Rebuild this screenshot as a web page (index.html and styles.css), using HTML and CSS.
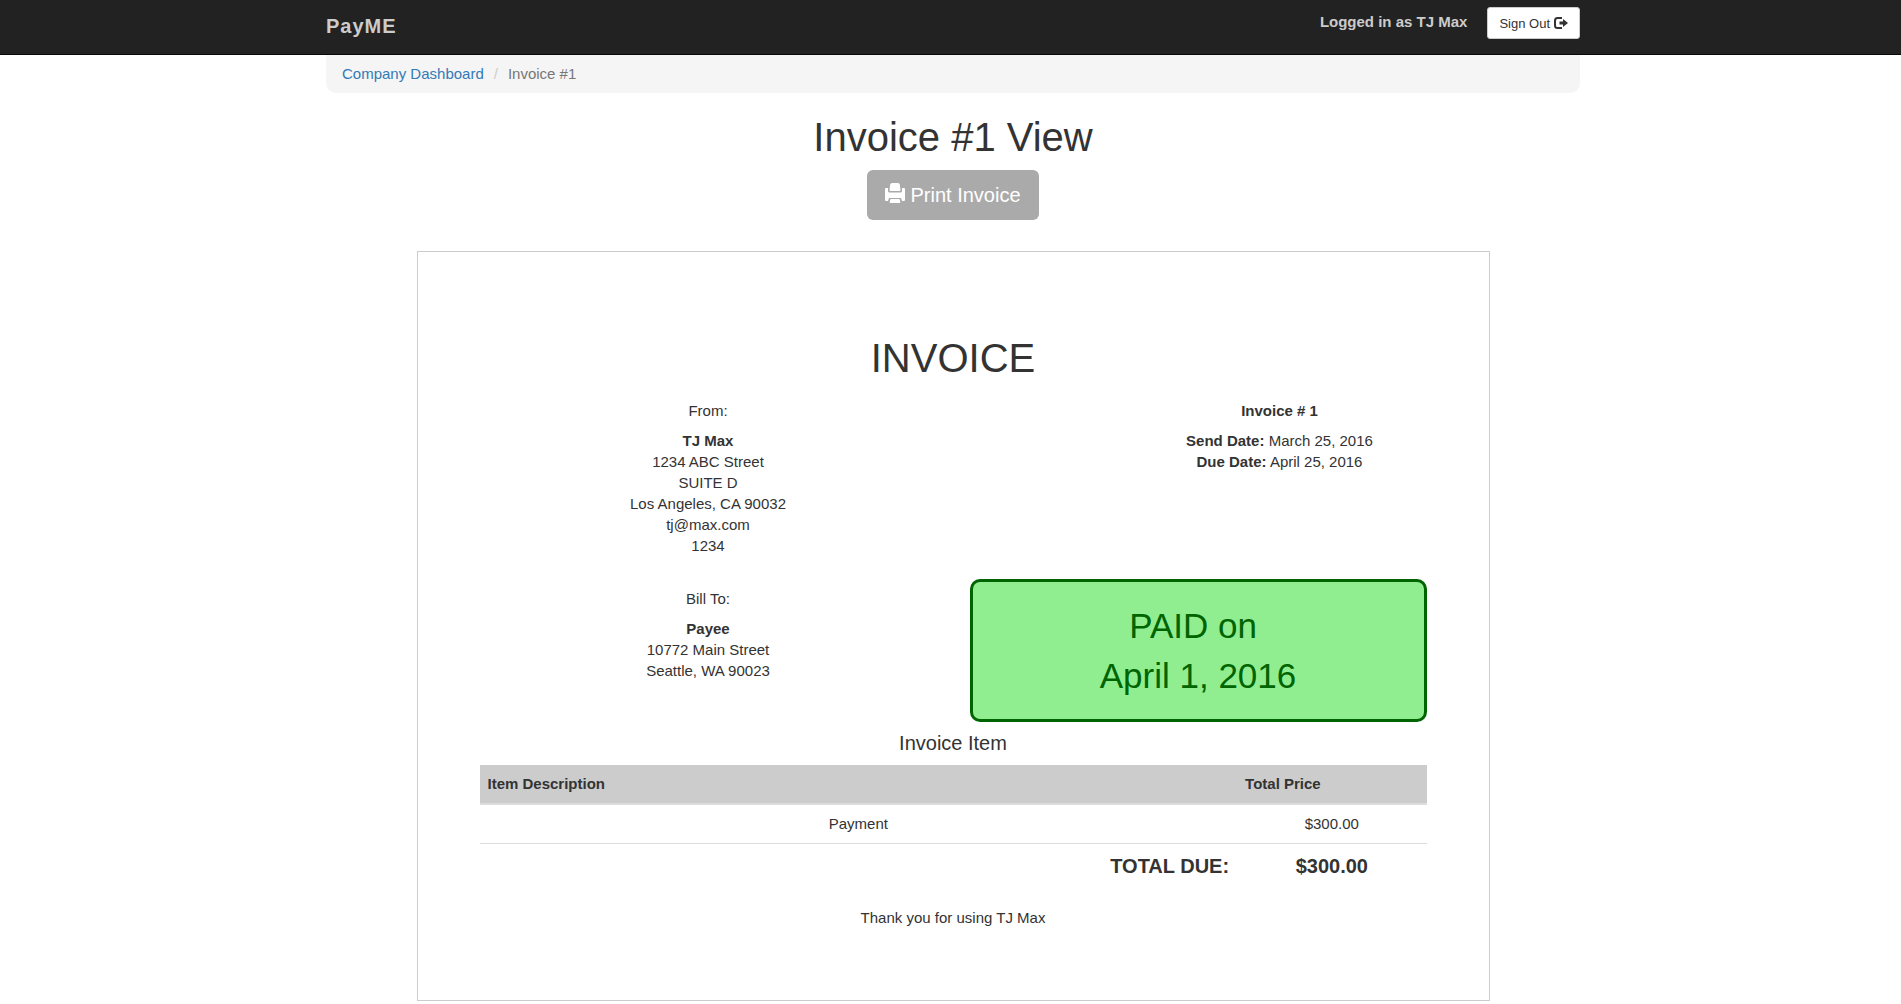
FILE: index.html
```html
<!DOCTYPE html>
<html lang="en">
<head>
<meta charset="utf-8">
<meta name="viewport" content="width=device-width, initial-scale=1">
<title>PayME - Invoice #1</title>
<link rel="stylesheet" href="styles.css">
</head>
<body>
<header class="navbar">
  <div class="container navbar-inner">
    <a class="brand" href="#">PayME</a>
    <div class="account">
      <span class="account-name">Logged in as TJ Max</span>
      <button class="btn btn-small" type="button">Sign Out
        <svg class="icon-small" viewBox="0 0 14 12" aria-hidden="true"><path d="M8 1H3.500Q1 1 1 3.500V8.500Q1 11 3.500 11H8" fill="none" stroke="currentColor" stroke-width="2"/><path d="M9 2l5 4-5 4V7.500H5.500v-3H9z" fill="currentColor"/></svg>
      </button>
    </div>
  </div>
</header>
<main class="container">
  <nav aria-label="Breadcrumb">
    <ol class="breadcrumb">
      <li><a href="#">Company Dashboard</a></li>
      <li class="current" aria-current="page">Invoice #1</li>
    </ol>
  </nav>
  <div class="page-head">
    <h1>Invoice #1 View</h1>
    <button class="btn btn-large" type="button">
      <svg class="icon-large" viewBox="0 0 20 20" aria-hidden="true"><path fill="currentColor" d="M7 0h6q1.500 0 1.800 1.500L15.500 7q0 1-1 1h-9q-1 0-1-1l.7-5.500Q5.500 0 7 0zM1 5h2v3q0 1.500 1.500 1.500h11Q17 9.500 17 8V5h2q1 0 1 1v11q0 1-1 1h-2l-1-3H4l-1 3H1q-1 0-1-1V6q0-1 1-1zM6 16h8q.6 0 .8.800l.5 2.200q.2 1-.7 1H5.400q-.9 0-.7-1l.5-2.200q.2-.8.800-.8z"/></svg>
      Print Invoice
    </button>
  </div>
  <article class="invoice">
    <h2 class="invoice-title">INVOICE</h2>
    <div class="row">
      <section class="half">
        <p class="label">From:</p>
        <address><strong>TJ Max</strong><br>1234 ABC Street<br>SUITE D<br>Los Angeles, CA 90032<br>tj@max.com<br>1234</address>
      </section>
      <section class="third">
        <p class="label"><strong>Invoice # 1</strong></p>
        <p><strong>Send Date:</strong> March 25, 2016<br><strong>Due Date:</strong> April 25, 2016</p>
      </section>
    </div>
    <div class="row row-billing">
      <section class="half bill-to">
        <p class="label">Bill To:</p>
        <address><strong>Payee</strong><br>10772 Main Street<br>Seattle, WA 90023</address>
      </section>
      <p class="half paid">PAID on&nbsp;<br>April 1, 2016</p>
    </div>
    <table class="items">
      <caption>Invoice Item</caption>
      <thead>
        <tr><th scope="col">Item Description</th><th class="price" scope="col">Total Price</th></tr>
      </thead>
      <tbody>
        <tr><td>Payment</td><td>$300.00</td></tr>
      </tbody>
      <tfoot>
        <tr><th class="total-label" scope="row">TOTAL DUE:</th><td>$300.00</td></tr>
      </tfoot>
    </table>
    <p class="thanks">Thank you for using TJ Max</p>
  </article>
</main>
</body>
</html>
```
FILE: styles.css
```css
* {
  box-sizing: border-box;
}

body {
  margin: 0;
  background: #fff;
  color: #333;
  font-family: "Liberation Sans", Arial, sans-serif;
  font-size: 15px;
  line-height: 21px;
}

h1, h2, p {
  margin: 0;
  font-weight: 400;
}

.container {
  width: calc(100% - 32px);
  max-width: 1254px;
  margin: 0 auto;
}

/* Both full-width bars share the same slight inset on the left */
body > * {
  padding-left: 5px;
}

main.container {
  max-width: 1259px;
}

.navbar {
  background: #222;
  border-bottom: 1px solid #080808;
}

.navbar-inner {
  display: flex;
  justify-content: space-between;
  min-height: 54px;
}

.brand {
  padding: 16px 0;
  color: #ccc;
  font-size: 20px;
  font-weight: 700;
  letter-spacing: 1px;
  text-decoration: none;
}

.account {
  display: flex;
  align-items: flex-start;
  gap: 20px;
  padding-top: 7px;
}

.account-name {
  padding-top: 4px;
  color: #ccc;
  font-weight: 700;
}

.btn {
  display: inline-flex;
  align-items: center;
  font-family: inherit;
  cursor: pointer;
}

.btn-small {
  gap: 4px;
  height: 32px;
  padding: 0 11px;
  border: 1px solid #ccc;
  border-radius: 3px;
  background: #fff;
  color: #333;
  font-size: 13px;
}

.icon-small {
  width: 14px;
  height: 12px;
}

.breadcrumb {
  display: flex;
  margin: 0;
  padding: 8px 16px 9px;
  border-radius: 0 0 10px 10px;
  background: #f5f5f5;
  list-style: none;
}

.breadcrumb a {
  color: #337ab7;
  text-decoration: none;
}

.breadcrumb .current {
  color: #777;
}

.breadcrumb .current::before {
  content: "/";
  padding: 0 10px;
  color: #ccc;
}

.page-head {
  display: flex;
  flex-direction: column;
  align-items: center;
  gap: 11px;
  padding-top: 22px;
}

h1 {
  font-size: 40px;
  line-height: 44px;
}

.btn-large {
  gap: 5px;
  height: 50px;
  padding: 0 18px;
  border: 0;
  border-radius: 6px;
  background: #aaa;
  color: #fff;
  font-size: 20px;
}

.icon-large {
  width: 20px;
  height: 20px;
  margin-bottom: 4px;
}

.invoice {
  max-width: 1073px;
  margin: 31px auto 2px;
  padding: 84px 62px 72px;
  border: 1px solid #ccc;
  text-align: center;
}

.invoice-title {
  font-size: 40px;
  line-height: 44px;
}

.row {
  display: flex;
  justify-content: space-between;
  gap: 33px;
  margin-top: 20px;
}

.row-billing {
  margin-top: 23px;
}

.half {
  flex: 0 1 457px;
}

.third {
  flex: 0 1 294px;
}

.label {
  margin-bottom: 9px;
}

address {
  font-style: normal;
}

.bill-to {
  padding-top: 9px;
}

.paid {
  padding: 19px 18px 18px;
  border: 3px solid #006400;
  border-radius: 10px;
  background: #90ee90;
  color: #006400;
  font-size: 35px;
  line-height: 50px;
}

.items {
  width: 100%;
  border-collapse: collapse;
}

.items caption {
  padding: 11px 0;
  font-size: 20px;
}

.items th,
.items td {
  padding: 8px 8px 9px;
}

.items thead th {
  background: #ccc;
  border-bottom: 2px solid #ddd;
  text-align: left;
}

.items .price {
  width: 20%;
}

.items tbody td {
  border-bottom: 1px solid #ddd;
}

.items tfoot th,
.items tfoot td {
  padding-top: 12px;
  font-size: 20px;
  font-weight: 700;
}

.items .total-label {
  text-align: right;
}

.thanks {
  padding-top: 21px;
}
```
